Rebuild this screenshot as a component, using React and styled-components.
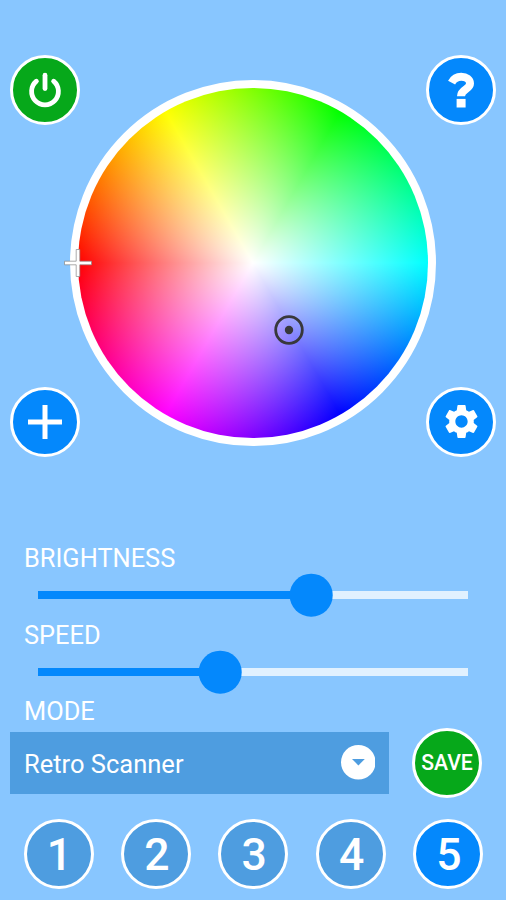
import React, { useState } from "react";
import styled, { createGlobalStyle } from "styled-components";
import { MdSettings } from "react-icons/md";

const GlobalStyle = createGlobalStyle`
  * {
    box-sizing: border-box;
  }
  body {
    margin: 0;
    background-color: #88c6ff;
    font-family: Roboto, "Liberation Sans", sans-serif;
  }
`;

const Screen = styled.main`
  display: flex;
  flex-direction: column;
  width: 506px;
  height: 900px;
  overflow: hidden;
  padding: 54.5px 9.7px 0 10px;
  background-color: #88c6ff;
  color: white;
`;

const PickerArea = styled.section`
  display: grid;
  grid-template-columns: 1fr 1fr;
  grid-template-rows: 1fr 1fr;
  height: 402.4px;
`;

const RoundButton = styled.button`
  display: flex;
  align-items: center;
  justify-content: center;
  flex-shrink: 0;
  width: 70px;
  height: 70px;
  padding: 0;
  border: 3px solid white;
  border-radius: 50%;
  background-color: ${(props) => props.$color || "#0488fc"};
  color: white;
  font-family: inherit;
  font-weight: 500;
  font-size: 21.2px;
  line-height: 1;
  cursor: pointer;
`;

const PresetButton = styled(RoundButton)`
  padding: 2px 0 0 2px;
  font-size: 44.5px;
`;

const CornerButton = styled(RoundButton)`
  grid-column: ${(props) => props.$col};
  grid-row: ${(props) => props.$row};
  justify-self: ${(props) => (props.$col === 1 ? "start" : "end")};
  align-self: ${(props) => (props.$row === 1 ? "start" : "end")};
`;

const Wheel = styled.div`
  position: relative;
  grid-column: 1 / -1;
  grid-row: 1 / -1;
  justify-self: center;
  width: 366px;
  height: 366px;
  margin-top: 25.5px;
  border: 8.5px solid white;
  border-radius: 50%;
  background: white;
`;

const Hues = styled.div`
  width: 100%;
  height: 100%;
  border-radius: 50%;
  background:
    radial-gradient(circle closest-side, white, rgba(255, 255, 255, 0)),
    conic-gradient(from 270deg, #f00, #ff0, #0f0, #0ff, #00f, #f0f, #f00);
`;

const Marker = styled.svg`
  position: absolute;
  left: ${(props) => props.$x}px;
  top: ${(props) => props.$y}px;
  transform: translate(-50%, -50%);
`;

const Controls = styled.section`
  display: flex;
  flex-direction: column;
  margin-top: 84px;
`;

const Label = styled.div`
  height: 32px;
  padding-left: 14px;
  font-size: 25.4px;
  line-height: 34px;
`;

const SliderBox = styled.div`
  display: flex;
  align-items: center;
  height: 44.7px;
  margin: 0 28px 0 28.3px;
`;

const Track = styled.div`
  position: relative;
  width: 100%;
  height: 7.5px;
  background-color: #e1f1ff;
`;

const Fill = styled.div`
  height: 100%;
  background-color: #0488fc;
`;

const Thumb = styled.div`
  position: absolute;
  top: 50%;
  width: 42.6px;
  height: 42.6px;
  border-radius: 50%;
  background-color: #0488fc;
  transform: translate(-50%, -50%);
`;

const ModeRow = styled.div`
  display: flex;
  align-items: center;
  justify-content: space-between;
  height: 70px;
  margin: 1.4px 14.3px 0 0;
`;

const ModeSelect = styled.div`
  display: flex;
  align-items: center;
  justify-content: space-between;
  width: 379px;
  height: 62px;
  padding: 0 13.7px 0 14px;
  background-color: #4e9de0;
  font-size: 25.5px;
`;

const ModeName = styled.span`
  padding-top: 2px;
`;

const Presets = styled.div`
  display: flex;
  justify-content: space-between;
  margin: 21.5px 13.3px 0 13.5px;
`;

const PowerIcon = () => (
  <svg width="40" height="40" viewBox="0 0 40 40" fill="none" stroke="white" strokeWidth="4.8" strokeLinecap="round">
    <path d="M20 5.2V18.6" />
    <path d="M11.4 11.2A13.4 13.4 0 1 0 28.6 11.2" />
  </svg>
);

const HelpIcon = () => (
  <svg width="40" height="40" viewBox="0 0 40 40" fill="none" stroke="white" strokeWidth="8">
    <path d="M10.6 12.6C12.8 8.6 16.2 6.8 20.2 6.8C25.4 6.8 29 9.6 29 13.6C29 19.6 20 19 20 26.2" />
    <path d="M15.6 33.2H24.6" strokeWidth="8.6" />
  </svg>
);

const PlusIcon = () => (
  <svg width="36" height="36" viewBox="0 0 36 36" stroke="white" strokeWidth="5">
    <path d="M18 1V35M1 18H35" />
  </svg>
);

const DropIcon = () => (
  <svg width="34.6" height="34.6" viewBox="0 0 34.6 34.6">
    <circle cx="17.3" cy="17.3" r="17.3" fill="white" />
    <path d="M11 14H23.8L17.4 20.4Z" fill="#4e9de0" />
  </svg>
);

const Slider = ({ label, value }) => (
  <div>
    <Label>{label}</Label>
    <SliderBox>
      <Track>
        <Fill style={{ width: `${value}%` }} />
        <Thumb style={{ left: `${value}%` }} />
      </Track>
    </SliderBox>
  </div>
);

const App = () => {
  const [preset, setPreset] = useState(5);

  return (
    <Screen>
      <GlobalStyle />
      <PickerArea>
        <Wheel>
          <Hues />
          <Marker $x={0} $y={174.5} width="30" height="30" viewBox="0 0 30 30">
            <path
              d="M13.2 1.5H16.8V13.2H28.5V16.8H16.8V28.5H13.2V16.8H1.5V13.2H13.2Z"
              fill="white"
              stroke="#888"
              strokeOpacity="0.7"
              strokeWidth="1"
            />
          </Marker>
          <Marker $x={211} $y={241.5} width="32" height="32" viewBox="0 0 32 32">
            <circle cx="16" cy="16" r="13.3" fill="none" stroke="#38383c" strokeWidth="2.8" />
            <circle cx="16" cy="16" r="4.2" fill="#38383c" />
          </Marker>
        </Wheel>
        <CornerButton $col={1} $row={1} $color="#06a81a">
          <PowerIcon />
        </CornerButton>
        <CornerButton $col={2} $row={1}>
          <HelpIcon />
        </CornerButton>
        <CornerButton $col={1} $row={2}>
          <PlusIcon />
        </CornerButton>
        <CornerButton $col={2} $row={2}>
          <MdSettings size={41} />
        </CornerButton>
      </PickerArea>
      <Controls>
        <Slider label="BRIGHTNESS" value={63.5} />
        <Slider label="SPEED" value={42.3} />
        <Label>MODE</Label>
        <ModeRow>
          <ModeSelect>
            <ModeName>Retro Scanner</ModeName>
            <DropIcon />
          </ModeSelect>
          <RoundButton $color="#06a81a">SAVE</RoundButton>
        </ModeRow>
      </Controls>
      <Presets>
        {[1, 2, 3, 4, 5].map((n) => (
          <PresetButton
            key={n}
            $color={n === preset ? "#0488fc" : "#4e9de0"}
            onClick={() => setPreset(n)}
          >
            {n}
          </PresetButton>
        ))}
      </Presets>
    </Screen>
  );
};

export default App;
